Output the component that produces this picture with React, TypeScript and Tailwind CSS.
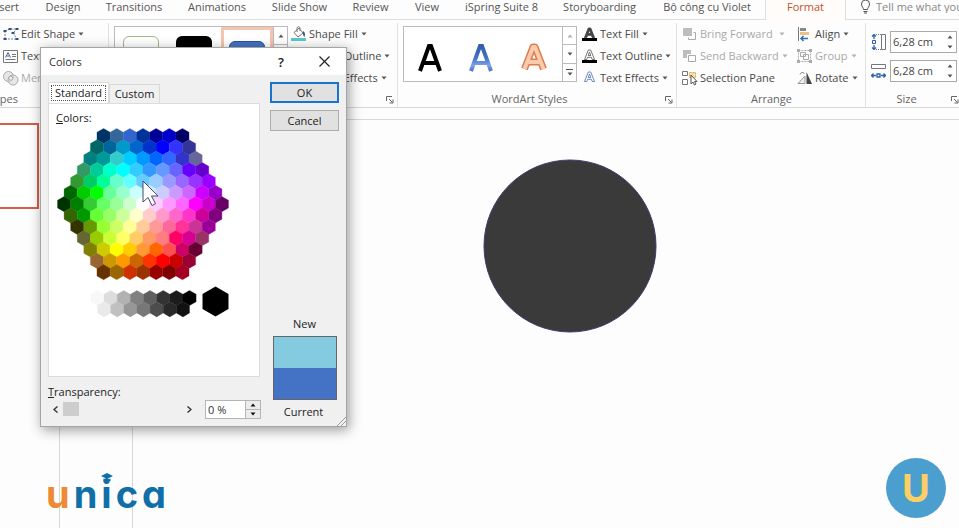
import type { ReactNode } from "react";

const HONEYCOMB = [
  "003366 336699 3366CC 003399 000099 0000CC 000066",
  "006666 006699 0099CC 0066CC 0033CC 0000FF 3333FF 333399",
  "008080 009999 33CCCC 00CCFF 0099FF 0066FF 3366FF 3333CC 666699",
  "339966 00CC99 00FFCC 00FFFF 33CCFF 3399FF 6699FF 6666FF 6600FF 6600CC",
  "339933 00CC66 00FF99 66FFCC 66FFFF 66CCFF 99CCFF 9999FF 9966FF 9933FF 9900FF",
  "006600 00CC00 00FF00 66FF99 99FFCC CCFFFF CCECFF CCCCFF CC99FF CC66FF CC00FF 9900CC",
  "003300 008000 33CC33 66FF66 99FF99 CCFFCC FFFFFF FFCCFF FF99FF FF66FF FF00FF CC00CC 660066",
  "336600 009900 66FF33 99FF66 CCFF99 FFFFCC FFCCCC FF99CC FF66CC FF33CC CC0099 800080",
  "333300 669900 99FF33 CCFF66 FFFF99 FFCC99 FF9999 FF6699 FF3399 CC3399 990099",
  "666633 99CC00 CCFF33 FFFF66 FFCC66 FF9966 FF7C80 FF0066 D60093 993366",
  "808000 CCCC00 FFFF00 FFCC00 FF9933 FF6600 FF5050 CC0066 660033",
  "996633 CC9900 FF9900 CC6600 FF3300 FF0000 CC0000 990033",
  "663300 996600 CC3300 993300 990000 800000 A50021",
].map((row) => row.split(" "));

const GRAYS = [
  "F8F8F8 DDDDDD B2B2B2 808080 5F5F5F 333333 1C1C1C 000000".split(" "),
  "EAEAEA C0C0C0 969696 777777 4D4D4D 292929 111111".split(" "),
];

const HEX_W = 13.15;
const HEX_R = 7.6;
const ROW_H = 11.35;

function hexPoints(cx: number, cy: number, r: number) {
  return [0, 1, 2, 3, 4, 5]
    .map((i) => {
      const a = (Math.PI / 3) * i + Math.PI / 6;
      return `${(cx + r * Math.cos(a)).toFixed(2)},${(cy + r * Math.sin(a)).toFixed(2)}`;
    })
    .join(" ");
}

function HexRow({ colors, cx, cy }: { colors: string[]; cx: number; cy: number }) {
  return (
    <g>
      {colors.map((c, i) => {
        const x = cx + (i - (colors.length - 1) / 2) * HEX_W;
        return <polygon key={i} points={hexPoints(x, cy, HEX_R)} fill={`#${c}`} stroke={`#${c}`} strokeWidth="0.3" />;
      })}
    </g>
  );
}

function ColorHoneycomb() {
  return (
    <svg width="180" height="194" viewBox="0 0 180 194" role="img" aria-label="Standard colors" className="block">
      {HONEYCOMB.map((row, i) => (
        <HexRow key={i} colors={row} cx={87} cy={10 + i * ROW_H} />
      ))}
      <HexRow colors={GRAYS[0]} cx={87.5} cy={172} />
      <HexRow colors={GRAYS[1]} cx={87.5} cy={183.3} />
      <polygon points={hexPoints(159.5, 175.500, 15)} fill="#000" />
      <path d="M87 55v21l5-4.500 4 8 3.500-1.700-4-7.800h6.500z" fill="#fff" stroke="#4a4a60" strokeWidth="1" />
    </svg>
  );
}

function Caret({ dim = false, dark = false }: { dim?: boolean; dark?: boolean }) {
  return (
    <svg width="6" height="4" viewBox="0 0 6 4" className="shrink-0">
      <path d="M0.500 0.500h5L3 3.500z" fill={dim ? "#b0b0b0" : dark ? "#111" : "#555"} />
    </svg>
  );
}

function Command({ icon, label, caret = true, dim = false, wide = false }: { icon: ReactNode; label: string; caret?: boolean; dim?: boolean; wide?: boolean }) {
  return (
    <button type="button" disabled={dim} className={`flex h-[22px] items-center whitespace-nowrap ${dim ? "text-[#a9a9a9]" : "text-[#4a4a4a]"}`}>
      <span className="flex w-[18px] shrink-0 items-center">{icon}</span>
      {label}
      {caret && (
        <span className={wide ? "ml-[6px]" : "ml-[3px]"}>
          <Caret dim={dim} />
        </span>
      )}
    </button>
  );
}

function Launcher({ label }: { label: string }) {
  return (
    <button type="button" aria-label={label} className="absolute right-[3px] bottom-[3px]">
      <svg width="8" height="8" viewBox="0 0 8 8" fill="none" stroke="#666">
        <path d="M0.500 5V0.500H6M3 3l3.500 3.500M7 3.500V7H3.500" />
      </svg>
    </button>
  );
}

function Group({ title, launcher = false, className, children }: { title: string; launcher?: boolean; className: string; children: ReactNode }) {
  return (
    <section aria-label={title} className={`relative flex shrink-0 flex-col ${className}`}>
      <div className="flex h-[68px]">{children}</div>
      <div className={`text-center leading-4 whitespace-nowrap text-[#666] ${launcher ? "pr-5" : "pr-1"}`}>{title}</div>
      {launcher && <Launcher label={`${title} settings`} />}
    </section>
  );
}

function GalleryScroll({ top = false }: { top?: boolean }) {
  return (
    <div className="flex w-[14px] shrink-0 flex-col divide-y divide-[#bbb] border-l border-[#bbb]">
      <button type="button" aria-label="Previous row" className="flex flex-1 items-center justify-center">
        <span className="rotate-180"><Caret dim={top} /></span>
      </button>
      <button type="button" aria-label="Next row" className="flex flex-1 items-center justify-center"><Caret /></button>
      <button type="button" aria-label="More" className="flex flex-1 flex-col items-center justify-center gap-[2px]">
        <span className="h-px w-[7px] bg-[#555]" />
        <Caret />
      </button>
    </div>
  );
}

const tabs = [
  ["Design", "w-[60px]"],
  ["Transitions", "w-[82px]"],
  ["Animations", "w-[84px]"],
  ["Slide Show", "w-[81px]"],
  ["Review", "w-[61px]"],
  ["View", "w-[52px]"],
  ["iSpring Suite 8", "w-[97px]"],
  ["Storyboarding", "w-[99px]"],
  ["Bộ công cụ Violet", "w-[116px]"],
];

function TabStrip() {
  return (
    <nav className="flex h-[20px] shrink-0 text-[#555]">
      <button type="button" className="flex h-5 w-[33px] shrink-0 justify-end overflow-hidden border-b border-[#dedede] pr-[14px] leading-[13px]">Insert</button>
      {tabs.map(([name, width]) => (
        <button key={name} type="button" className={`flex h-5 shrink-0 justify-center border-b border-[#dedede] leading-[13px] whitespace-nowrap ${width}`}>
          {name}
        </button>
      ))}
      <button type="button" className="flex h-5 w-[81px] shrink-0 justify-center border-x border-[#dedede] bg-[#fffcfa] leading-[13px] font-medium text-[#c4532a]">
        Format
      </button>
      <label className="flex min-w-0 flex-1 items-start border-b border-[#dedede] pl-[14px]">
        <svg width="11" height="14" viewBox="0 0 11 14" fill="none" stroke="#555" className="mr-[5px] shrink-0">
          <path d="M3.500 9.500C3.500 7.500 1.500 7 1.500 4a4 4 0 0 1 8 0c0 3-2 3.500-2 5.500zM3.500 11.500h4M4 13h3" />
        </svg>
        <input aria-label="Tell me" placeholder="Tell me what you want to do" className="h-[13px] w-[160px] shrink-0 bg-transparent outline-none placeholder:text-[#888]" />
      </label>
    </nav>
  );
}

function LetterIcon({ fill, stroke, bar }: { fill: string; stroke: string; bar?: boolean }) {
  return (
    <svg width="15" height="15" viewBox="0 0 15 15">
      <path d="M2.500 10.500 6.300 1h2.400l3.800 9.500h-2.300l-.8-2.200H5.600l-.8 2.200zM6.200 6.500h2.600L7.500 3z" fill={fill} stroke={stroke} strokeWidth="0.900" />
      {bar && <path d="M0 11h15v3H0z" fill="#000" />}
    </svg>
  );
}

function SizeField({ label, icon }: { label: string; icon: ReactNode }) {
  return (
    <div className="flex items-center gap-1">
      {icon}
      <div className="flex h-[22px] w-[67px] border border-[#aaa] bg-white">
        <input aria-label={label} defaultValue="6,28 cm" className="w-[52px] min-w-0 pl-[2px] text-[11px] text-[#444] outline-none" />
        <div className="flex flex-1 flex-col items-center justify-around">
          <button type="button" aria-label={`Increase ${label}`} className="rotate-180"><Caret /></button>
          <button type="button" aria-label={`Decrease ${label}`}><Caret /></button>
        </div>
      </div>
    </div>
  );
}

function Ribbon() {
  return (
    <div className="flex h-[88px] shrink-0 overflow-hidden border-b border-[#d8d8d8] pt-[3px]">
      <Group title="" className="w-[109px] border-r border-[#e2e2e2] pl-[3px]">
        <div className="flex flex-col">
          <Command
            label="Edit Shape"
            icon={
              <svg width="16" height="14" viewBox="0 0 16 14" fill="none" stroke="#6f86aa">
                <path d="M2 4v8M2 12h12M2 4l5-2 7 0-4 4 4 6" strokeDasharray="2 1" />
                <path d="M0.500 3h3v2h-3zM5.500 1h3v2h-3zM12.500 1h3v2h-3zM8.500 5h3v2h-3zM0.500 11h3v2h-3zM12.500 11h3v2h-3z" fill="#35507c" stroke="none" />
              </svg>
            }
          />
          <Command
            label="Text Box"
            icon={
              <svg width="15" height="13" viewBox="0 0 15 13" fill="none" stroke="#777">
                <path d="M0.500 0.500h14v12H0.500zM9 4.500h4M9 6.500h4M2.500 9.500h10" />
                <path d="M2.500 7.500 5 2.500l2.500 5M3.500 6h3" stroke="#4a6a9a" />
              </svg>
            }
          />
          <Command
            dim
            label="Merge Shapes"
            icon={
              <svg width="16" height="15" viewBox="0 0 16 15" fill="#ddd" fillOpacity="0.700" stroke="#aaa">
                <circle cx="5.500" cy="5.500" r="5" />
                <circle cx="10" cy="9" r="5" />
                <circle cx="7.800" cy="7.200" r="2" fill="#f7f7f7" />
              </svg>
            }
          />
        </div>
        <span className="absolute bottom-[-1px] left-[-55px] w-[73px] text-right leading-[18px] text-[#666]">Insert Shapes</span>
      </Group>

      <Group title="Shape Styles" launcher className="w-[289px] border-r border-[#e2e2e2] pl-[5px]">
        <div className="mt-[3px] flex h-14 w-[174px] border border-[#bbb] bg-white">
          <div className="flex flex-1 items-start">
            <button type="button" aria-label="Outline style" className="mt-[9px] ml-2 h-[26px] w-9 rounded-[6px] border border-[#a3b98b]" />
            <button type="button" aria-label="Black style" className="mt-[9px] ml-[17px] h-[26px] w-9 rounded-[6px] bg-black" />
            <button type="button" aria-label="Blue style" className="ml-[9px] h-12 w-[52px] border-[3px] border-[#f6c4b0] px-[5px] pt-[6px]">
              <span className="block h-[26px] rounded-[6px] border border-[#2e4f8f] bg-[#4472c4]" />
            </button>
          </div>
          <GalleryScroll />
        </div>
        <div className="ml-[3px] flex flex-col">
          <Command
            label="Shape Fill"
            icon={
              <svg width="16" height="16" viewBox="0 0 16 16" fill="none" stroke="#777">
                <path d="M0 12h15v3H0z" fill="#58c9c9" stroke="none" />
                <path d="M3 6.500 8 2l4 5-5 4zM6 6V2.500C6 0 9 0 9 2.500V5" fill="#fff" />
                <path d="M12 5c2 1 2.500 3 1.500 6-1.500-1-2-4-1.500-6z" fill="#405a85" stroke="none" />
              </svg>
            }
          />
          <Command label="Shape Outline" icon={<LetterIcon fill="#fff" stroke="#666" bar />} />
          <Command label="Shape Effects" icon={<LetterIcon fill="#fff" stroke="#5b7fc0" />} />
        </div>
      </Group>

      <Group title="WordArt Styles" launcher className="w-[279px] border-r border-[#e2e2e2] pl-[5px]">
        <div className="mt-[3px] flex h-14 w-[174px] border border-[#bbb] bg-white">
          <div className="flex flex-1 items-center justify-around pt-2">
            <button type="button" aria-label="Black letter">
              <svg width="24" height="30" viewBox="0 0 24 30" fill="none" stroke="#000" strokeWidth="4">
                <path d="M2 28 11 3h2l9 25M6 20h12" />
              </svg>
            </button>
            <button type="button" aria-label="Blue letter">
              <svg width="24" height="30" viewBox="0 0 24 30" fill="none" strokeWidth="4">
                <defs>
                  <linearGradient id="wordBlue" gradientUnits="userSpaceOnUse" x1="0" y1="0" x2="0" y2="30">
                    <stop offset="0" stopColor="#3358a8" />
                    <stop offset="0.500" stopColor="#4472c4" />
                    <stop offset="0.750" stopColor="#7ea3ea" />
                    <stop offset="1" stopColor="#3a5fb0" />
                  </linearGradient>
                </defs>
                <path d="M2 28 11 3h2l9 25M6 20h12" stroke="url(#wordBlue)" />
              </svg>
            </button>
            <button type="button" aria-label="Orange letter">
              <svg width="28" height="30" viewBox="0 0 28 30" fill="none" strokeLinejoin="round">
                <path d="M4.500 26 13 4h2l8.500 22M8 19h12" stroke="#dd7c4e" strokeWidth="7" />
                <path d="M4.500 26 13 4h2l8.500 22M8 19h12" stroke="#f8cbad" strokeWidth="4" />
              </svg>
            </button>
          </div>
          <GalleryScroll top />
        </div>
        <div className="ml-[5px] flex flex-col">
          <Command label="Text Fill" icon={<LetterIcon fill="#444" stroke="#444" bar />} />
          <Command label="Text Outline" icon={<LetterIcon fill="#fff" stroke="#666" bar />} />
          <Command label="Text Effects" icon={<LetterIcon fill="#fff" stroke="#5b7fc0" />} />
        </div>
      </Group>

      <Group title="Arrange" className="w-[189px] border-r border-[#e2e2e2] pl-[5px]">
        <div className="flex w-[115px] shrink-0 flex-col">
          <Command
            dim
            wide
            label="Bring Forward"
            icon={
              <svg width="15" height="14" viewBox="0 0 15 14">
                <path d="M1 1h9v8H1z" fill="#bdbdbd" />
                <path d="M11.500 5.500h2v7h-7v-2" fill="none" stroke="#aaa" />
              </svg>
            }
          />
          <Command
            dim
            label="Send Backward"
            icon={
              <svg width="15" height="14" viewBox="0 0 15 14">
                <path d="M1 1h8v4H5v4H1z" fill="#bdbdbd" />
                <path d="M6.500 6.500h7v6h-7z" fill="none" stroke="#aaa" />
              </svg>
            }
          />
          <Command
            label="Selection Pane"
            caret={false}
            icon={
              <svg width="16" height="16" viewBox="0 0 16 16" fill="none" stroke="#777">
                <path d="M0.500 1.500h5v4h-5zM0.500 9.500h5v5h-5z" />
                <path d="M7.500 2.500h6v5h-6z" fill="#f7dcae" stroke="#e0a44c" strokeDasharray="2 1" />
                <path d="M9 5v9l2-2 1.500 3 1.500-1-1.500-2.500H15z" fill="#fff" stroke="#555" />
              </svg>
            }
          />
        </div>
        <div className="flex flex-col">
          <Command
            label="Align"
            icon={
              <svg width="14" height="16" viewBox="0 0 14 16" fill="none">
                <path d="M1.500 1v14" stroke="#777" />
                <path d="M3 2h6v3H3z" fill="#888" />
                <path d="M3 6h9v3H3z" fill="#ecc089" />
                <path d="M11 12.500H4M6.500 10 4 12.500 6.500 15" stroke="#2f6cb5" strokeWidth="1.500" />
              </svg>
            }
          />
          <Command
            dim
            label="Group"
            icon={
              <svg width="15" height="14" viewBox="0 0 15 14" fill="none" stroke="#aaa">
                <path d="M1.500 1.500h12v11h-12z" strokeDasharray="2 1" />
                <path d="M3.500 3.500h5v4h-5zM6.500 5.500h5v5h-5z" />
                <path d="M0 0h3v3H0zM12 0h3v3h-3zM0 11h3v3H0zM12 11h3v3h-3z" fill="#aaa" stroke="none" />
              </svg>
            }
          />
          <Command
            label="Rotate"
            icon={
              <svg width="16" height="14" viewBox="0 0 16 14">
                <path d="M8 5v7.500H1z" fill="#eee" stroke="#999" />
                <path d="M9.500 1v12H15z" fill="#444" />
                <path d="M3 3.500c1-2.500 3-2.500 4.500-1" fill="none" stroke="#777" />
              </svg>
            }
          />
        </div>
      </Group>

      <Group title="Size" launcher className="w-[96px] pl-[5px]">
        <div className="mt-2 flex flex-col gap-[7px]">
          <SizeField
            label="height"
            icon={
              <svg width="15" height="16" viewBox="0 0 15 16" fill="none" stroke="#777">
                <path d="M10.500 0.500h4v15h-4z" />
                <path d="M3 0v5M3 11v5M1 2.500 3 .5l2 2M1 13.500l2 2 2-2" stroke="#2f5fa5" strokeWidth="1.300" />
                <path d="M1.500 6.500h3v3h-3z" stroke="#2f5fa5" />
                <path d="M5 .5h5M5 15.500h5" strokeDasharray="1 1" />
              </svg>
            }
          />
          <SizeField
            label="width"
            icon={
              <svg width="15" height="16" viewBox="0 0 15 16" fill="none" stroke="#777">
                <path d="M0.500 1.500h14v4H0.500z" />
                <path d="M0 12.500h5M10 12.500h5M2.500 10.500l-2 2 2 2M12.500 10.500l2 2-2 2M6 11h3v3H6z" stroke="#2f5fa5" strokeWidth="1.300" />
              </svg>
            }
          />
        </div>
      </Group>
    </div>
  );
}

function ColorsDialog() {
  return (
    <div
      role="dialog"
      aria-labelledby="colors-title"
      className="absolute top-[47px] left-[40px] flex w-[307px] flex-col border border-[#a5a5a5] bg-[#f0f0f0] text-[#222] shadow-[2px_3px_12px_rgba(0,0,0,0.400)]"
    >
      <header className="flex h-[27px] items-center bg-white pl-2">
        <h2 id="colors-title" className="flex-1 text-[#333]">Colors</h2>
        <button type="button" aria-label="Help" className="w-[42px] text-[13px] font-semibold">?</button>
        <button type="button" aria-label="Close" className="flex w-[44px] justify-center">
          <svg width="11" height="11" viewBox="0 0 11 11" stroke="#222" strokeWidth="1.200">
            <path d="M0.500 0.500l10 10M10.500 0.500l-10 10" />
          </svg>
        </button>
      </header>
      <div className="flex gap-[10px] pt-[7px] pr-[7px] pl-[7px]">
        <div className="w-[212px]">
          <div role="tablist" className="flex items-end">
            <button type="button" role="tab" aria-selected="true" className="h-[21px] w-[61px] border border-b-0 border-[#dcdcdc] bg-white p-[2px]">
              <span className="flex h-full items-center justify-center border border-dotted border-[#555]">Standard</span>
            </button>
            <button type="button" role="tab" aria-selected="false" className="h-[19px] w-[51px] border border-b-0 border-[#d9d9d9]">Custom</button>
          </div>
          <div role="tabpanel" className="h-[274px] border border-[#dcdcdc] bg-white pt-[6px] pl-[7px]">
            <p className="leading-4"><span className="underline">C</span>olors:</p>
            <ColorHoneycomb />
          </div>
          <div className="mt-[7px] leading-4">
            <label htmlFor="transparency"><span className="underline">T</span>ransparency:</label>
          </div>
        </div>
        <div className="flex flex-1 flex-col items-center">
          <button type="button" className="h-[21px] w-full border-2 border-[#1874cd] bg-[#e1e1e1] leading-none">OK</button>
          <button type="button" className="mt-[7px] h-[21px] w-full border border-[#adadad] bg-[#e1e1e1] leading-none">Cancel</button>
          <span className="mt-auto leading-4">New</span>
          <div className="mt-1 flex h-16 w-16 flex-col border border-[#666]">
            <span className="flex-1 bg-[#84cbdf]" />
            <span className="flex-1 bg-[#4472c4]" />
          </div>
        </div>
      </div>
      <div className="flex h-[26px] pl-[6px]">
        <div className="flex h-[18px] w-[150px] items-center">
          <button type="button" aria-label="Less transparent" className="flex w-4 justify-center">
            <svg width="5" height="7" viewBox="0 0 5 7" fill="none" stroke="#333" strokeWidth="1.400"><path d="M4.500.5l-3.500 3 3.500 3" /></svg>
          </button>
          <input
            id="transparency"
            type="range"
            min={0}
            max={100}
            defaultValue={0}
            className="h-[14px] w-[118px] appearance-none bg-transparent [&::-webkit-slider-thumb]:h-[14px] [&::-webkit-slider-thumb]:w-4 [&::-webkit-slider-thumb]:appearance-none [&::-webkit-slider-thumb]:bg-[#cdcdcd]"
          />
          <button type="button" aria-label="More transparent" className="flex w-4 justify-center">
            <svg width="5" height="7" viewBox="0 0 5 7" fill="none" stroke="#333" strokeWidth="1.400"><path d="M.5.5l3.500 3-3.500 3" /></svg>
          </button>
        </div>
        <div className="ml-2 flex h-[19px] w-[56px] border border-[#b5b5b5] bg-white">
          <input aria-label="Transparency percent" defaultValue="0 %" className="w-[39px] min-w-0 pl-[2px] text-[#333] outline-none" />
          <div className="flex flex-1 flex-col border-l border-[#b5b5b5] bg-[#ececec]">
            <button type="button" aria-label="Increase transparency" className="flex flex-1 items-center justify-center border-b border-[#b5b5b5]"><span className="rotate-180"><Caret dark /></span></button>
            <button type="button" aria-label="Decrease transparency" className="flex flex-1 items-center justify-center"><Caret dark /></button>
          </div>
        </div>
        <span className="flex-1 pt-1 text-center leading-4">Current</span>
      </div>
      <svg width="9" height="9" viewBox="0 0 9 9" stroke="#999" className="absolute right-0 bottom-0">
        <path d="M0 9l9-9M4 9l5-5" />
      </svg>
    </div>
  );
}

export default function App() {
  return (
    <div className="relative flex min-h-screen flex-col overflow-hidden bg-[#fdfdfd] font-['Open_Sans','Noto_Sans',sans-serif] text-[11px] leading-4">
      <TabStrip />
      <Ribbon />
      <div className="flex flex-1">
        <aside aria-label="Slides" className="w-[60px] shrink-0 border-r border-[#d8d8d8] pt-[15px]">
          <button type="button" aria-label="Slide 1" className="block h-[86px] w-[39px] border-2 border-l-0 border-[#d35f47] bg-white" />
        </aside>
        <div className="w-[73px] shrink-0 border-r border-[#d8d8d8]" />
        <main className="relative mt-[11px] flex-1 border-t border-[#d8d8d8]">
          <svg width="174" height="174" viewBox="0 0 174 174" role="img" aria-label="Circle shape" className="absolute top-[39px] left-[350px]">
            <circle cx="87" cy="87" r="86" fill="#3a3a3a" stroke="#3c3c70" />
          </svg>
        </main>
      </div>

      <ColorsDialog />

      <div className="absolute bottom-[13px] left-[46px] flex items-end gap-1 font-['Inter',sans-serif] text-[38px] leading-[42px] font-bold text-[#106fa8] [font-feature-settings:'cv11']">
        <span className="text-[#ee8a34]">u</span>
        <span>n</span>
        <span className="relative">
          i
          <svg width="12" height="9" viewBox="0 0 12 9" fill="#106fa8" className="absolute top-0 left-0">
            <path d="M0 3l6-3 6 3-6 3zM2.500 5.500 6 7l3.500-1.500V8L6 9 2.500 8z" />
          </svg>
        </span>
        <span>c</span>
        <span>a</span>
      </div>
      <div className="absolute right-[13px] bottom-[10px] flex h-[60px] w-[60px] items-center justify-center rounded-full bg-[#4b9fce] font-['Inter',sans-serif] text-[38px] font-bold text-[#fbcf63]">
        U
      </div>
    </div>
  );
}
